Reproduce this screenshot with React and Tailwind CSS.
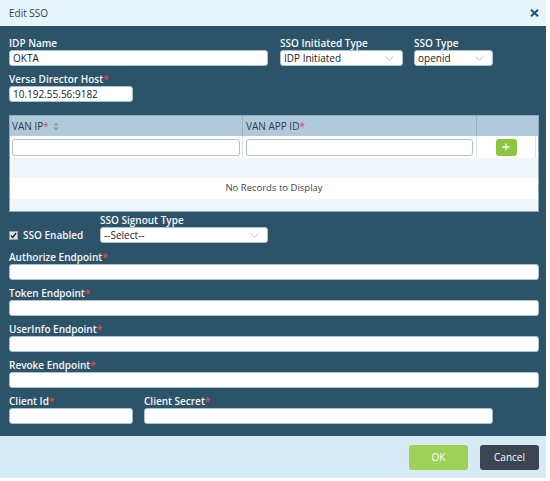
const font = { fontFamily: '"Open Sans", "Noto Sans", sans-serif' };

function Chevron() {
  return (
    <svg width="9" height="5" viewBox="0 0 9 5" className="shrink-0">
      <path d="M0.5 0.5 L4.5 4.3 L8.5 0.5" fill="none" stroke="#b8c2c9" strokeWidth="1" />
    </svg>
  );
}

function Label({ text, req, className = '' }) {
  return (
    <div className={`h-[14px] leading-[14px] text-[10px] font-semibold text-[#f4f8fb] whitespace-nowrap ${className}`}>
      {text}
      {req && <span className="text-[#e8405a]">*</span>}
    </div>
  );
}

function Input({ value = '', className = '' }) {
  return (
    <div className={`h-[16px] bg-white rounded-[3px] border border-[#a9c3d3] px-[3px] flex items-center text-[10px] text-[#222] ${className}`}>
      {value}
    </div>
  );
}

function Select({ value, className = '' }) {
  return (
    <div className={`h-[16px] bg-white rounded-[3px] border border-[#a9c3d3] pl-[3px] pr-[8px] flex items-center justify-between text-[10px] text-[#222] ${className}`}>
      <span>{value}</span>
      <Chevron />
    </div>
  );
}

export default function App() {
  return (
    <div className="w-[550px] h-[481px] bg-white" style={font}>
      <div className="w-[546px] h-[478px] flex flex-col">
        <div className="h-[26px] bg-[#e8f4fc] pl-[9px] pr-[7px] flex items-center justify-between">
          <span className="text-[10px] text-[#2b3f4d]">Edit SSO</span>
          <svg width="9" height="8" viewBox="0 0 9 8">
            <path d="M1 0.8 L8 7.2 M8 0.8 L1 7.2" stroke="#1c4d74" strokeWidth="2" />
          </svg>
        </div>

        <div className="flex-1 bg-[#2d5368] pl-[9px] pr-[7px] pt-[10px]">
          <div className="flex">
            <div className="w-[259px]">
              <Label text="IDP Name" />
              <Input value="OKTA" />
            </div>
            <div className="w-[123px] ml-[12px]">
              <Label text="SSO Initiated Type" />
              <Select value="IDP Initiated" />
            </div>
            <div className="w-[79px] ml-[11px]">
              <Label text="SSO Type" />
              <Select value="openid" />
            </div>
          </div>

          <div className="mt-[6px] w-[124px]">
            <Label text="Versa Director Host" req />
            <Input value="10.192.55.56:9182" />
          </div>

          <div className="mt-[13px] h-[97px] w-[530px] border border-[#8aa9bd] bg-white flex flex-col">
            <div className="h-[20px] bg-[#b1cadb] flex text-[10px] text-[#2f3b44]">
              <div className="w-[233px] border-r border-[#95b2c5] pl-[2px] flex items-center">
                VAN IP<span className="text-[#e8405a]">*</span>
                <svg width="6" height="9" viewBox="0 0 6 9" className="ml-[4px]">
                  <path d="M3 0.5 L5.5 3.5 L0.5 3.5 Z M3 8.5 L5.5 5.5 L0.5 5.5 Z" fill="#8a9aa6" />
                </svg>
              </div>
              <div className="w-[234px] border-r border-[#95b2c5] pl-[3px] flex items-center">
                VAN APP ID<span className="text-[#e8405a]">*</span>
              </div>
              <div className="flex-1" />
            </div>
            <div className="h-[22px] flex items-center">
              <div className="w-[233px] h-full border-r border-[#dde3e7] pl-[2px] pr-[2px] flex items-center">
                <Input className="w-full h-[17px]" />
              </div>
              <div className="w-[234px] h-full border-r border-[#dde3e7] pl-[3px] pr-[3px] flex items-center">
                <Input className="w-full h-[17px]" />
              </div>
              <div className="w-[59px] h-full border-r border-[#dde3e7] flex items-center justify-center">
                <div className="w-[21px] h-[17px] rounded-[3px] bg-[#8cc63f] flex items-center justify-center">
                  <svg width="8" height="8" viewBox="0 0 8 8">
                    <path d="M4 0.5 V7.5 M0.5 4 H7.5" stroke="white" strokeWidth="1.3" />
                  </svg>
                </div>
              </div>
            </div>
            <div className="h-[20px] bg-[#f1f6fa]" />
            <div className="h-[21px] flex items-center justify-center text-[9.5px] text-[#3a4750]">
              No Records to Display
            </div>
            <div className="flex-1 bg-[#f1f6fa]" />
          </div>

          <div className="mt-[1px] flex items-end">
            <div className="w-[91px] h-[16px] flex items-center">
              <div className="w-[9px] h-[9px] bg-[#e4e4e4] border border-[#9a9a9a] flex items-center justify-center">
                <svg width="7" height="7" viewBox="0 0 7 7">
                  <path d="M1 3.5 L2.8 5.5 L6 1" fill="none" stroke="#222" strokeWidth="1.4" />
                </svg>
              </div>
              <span className="ml-[5px] text-[10px] font-semibold text-[#f4f8fb]">SSO Enabled</span>
            </div>
            <div className="w-[168px]">
              <Label text="SSO Signout Type" />
              <Select value="--Select--" />
            </div>
          </div>

          {['Authorize Endpoint', 'Token Endpoint', 'UserInfo Endpoint', 'Revoke Endpoint'].map((t, i) => (
            <div key={t} className={i === 0 ? 'mt-[7px]' : 'mt-[6px]'}>
              <Label text={t} req />
              <Input className="w-[530px]" />
            </div>
          ))}

          <div className="mt-[6px] flex">
            <div className="w-[124px]">
              <Label text="Client Id" req />
              <Input />
            </div>
            <div className="w-[349px] ml-[11px]">
              <Label text="Client Secret" req />
              <Input />
            </div>
          </div>
        </div>

        <div className="h-[42px] bg-[#d7ebf7] pr-[7px] flex items-center justify-end gap-[12px]">
          <div className="w-[59px] h-[25px] rounded-[3px] bg-[#9dd15a] flex items-center justify-center text-[10px] text-white">
            OK
          </div>
          <div className="w-[59px] h-[25px] rounded-[3px] bg-[#3b4653] flex items-center justify-center text-[10px] text-white">
            Cancel
          </div>
        </div>
      </div>
    </div>
  );
}
